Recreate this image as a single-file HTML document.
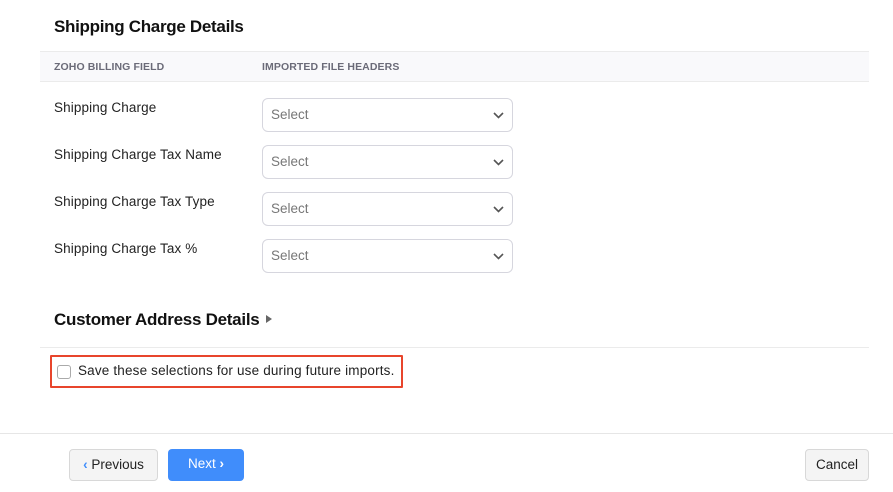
<!DOCTYPE html>
<html><head><meta charset="utf-8"><style>
*{box-sizing:border-box;margin:0;padding:0}
body{width:893px;height:492px;background:#fff;font-family:"Liberation Sans",sans-serif;color:#222;position:relative;overflow:hidden}
.abs{position:absolute}
h2{position:absolute;font-size:17px;font-weight:700;color:#111;letter-spacing:-0.3px}
.hdr{position:absolute;left:40px;top:51px;width:829px;height:31px;background:#f9f9fb;border-top:1px solid #ebebeb;border-bottom:1px solid #ebebeb}
.hdr span{position:absolute;top:9px;font-size:10.5px;font-weight:700;color:#6b6b78;letter-spacing:.1px}
.lbl{position:absolute;left:54px;font-size:13.5px;color:#222;letter-spacing:.12px}
.sel{position:absolute;left:262px;width:251px;height:34px;border:1px solid #d6d6de;border-radius:6px;font-size:13.5px;color:#777;padding:8px 8px}
.sel svg{position:absolute;right:8px;top:13px}
.btn{position:absolute;top:449px;height:32px;border-radius:4px;font-size:13.5px;padding-top:7px;text-align:center}
</style></head><body>
<h2 style="left:54px;top:17px">Shipping Charge Details</h2>
<div class="hdr"><span style="left:14px">ZOHO BILLING FIELD</span><span style="left:222px">IMPORTED FILE HEADERS</span></div>

<div class="lbl" style="top:100px">Shipping Charge</div>
<div class="sel" style="top:98px">Select<svg width="11" height="7" viewBox="0 0 11 7"><path d="M1 1l4.5 4.5L10 1" fill="none" stroke="#555" stroke-width="1.6"/></svg></div>
<div class="lbl" style="top:147px">Shipping Charge Tax Name</div>
<div class="sel" style="top:145px">Select<svg width="11" height="7" viewBox="0 0 11 7"><path d="M1 1l4.5 4.5L10 1" fill="none" stroke="#555" stroke-width="1.6"/></svg></div>
<div class="lbl" style="top:194px">Shipping Charge Tax Type</div>
<div class="sel" style="top:192px">Select<svg width="11" height="7" viewBox="0 0 11 7"><path d="M1 1l4.5 4.5L10 1" fill="none" stroke="#555" stroke-width="1.6"/></svg></div>
<div class="lbl" style="top:241px">Shipping Charge Tax %</div>
<div class="sel" style="top:239px">Select<svg width="11" height="7" viewBox="0 0 11 7"><path d="M1 1l4.5 4.5L10 1" fill="none" stroke="#555" stroke-width="1.6"/></svg></div>

<h2 style="left:54px;top:310px;letter-spacing:-0.27px">Customer Address Details</h2>
<svg class="abs" style="left:266px;top:315px" width="6" height="8" viewBox="0 0 6 8"><path d="M0 0L6 4L0 8Z" fill="#666"/></svg>
<div class="abs" style="left:40px;top:347px;width:829px;height:1px;background:#ebebeb"></div>
<div class="abs" style="left:50px;top:355px;width:353px;height:33px;border:2px solid #e8452c;border-radius:1px"></div>
<div class="abs" style="left:57px;top:365px;width:14px;height:14px;border:1px solid #aaa;border-radius:3px"></div>
<div class="abs" style="left:78px;top:363px;font-size:13.5px;color:#222;letter-spacing:.17px">Save these selections for use during future imports.</div>

<div class="abs" style="left:0;top:433px;width:893px;height:1px;background:#e6e6e6"></div>
<div class="btn" style="left:69px;width:89px;background:#f4f4f4;border:1px solid #d8d8d8;color:#222"><span style="color:#408dfb;font-weight:700">‹</span> Previous</div>
<div class="btn" style="left:168px;width:76px;background:#408dfb;color:#fff">Next <b>›</b></div>
<div class="btn" style="left:805px;width:64px;background:#f4f4f4;border:1px solid #d8d8d8;color:#222">Cancel</div>
</body></html>
